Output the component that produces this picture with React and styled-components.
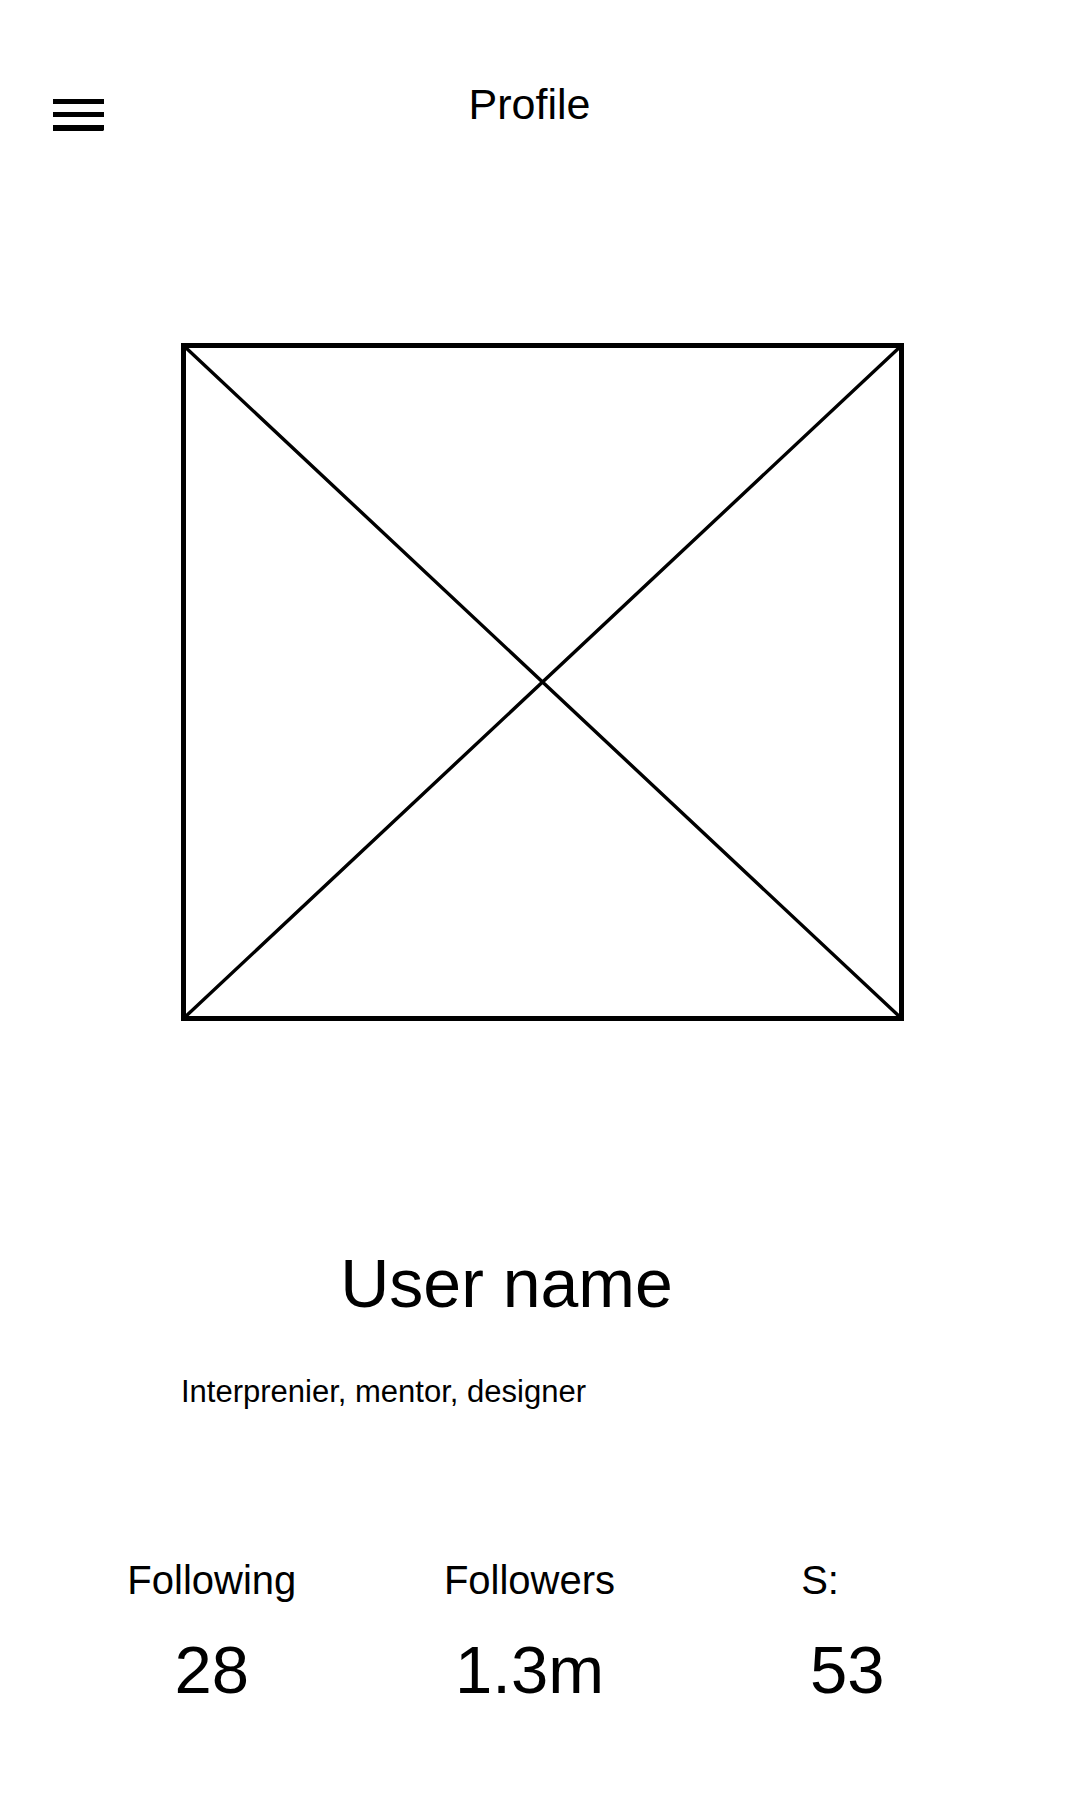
import React from 'react';
import styled, { createGlobalStyle } from 'styled-components';

const GlobalStyle = createGlobalStyle`
  *, *::before, *::after {
    box-sizing: border-box;
  }

  body {
    margin: 0;
    background: #fff;
    color: #000;
    font-family: "Liberation Sans", Arial, sans-serif;
  }
`;

const Page = styled.div`
  display: flex;
  flex-direction: column;
  min-height: 100vh;
  padding: 79px 74px 90px 53px;
`;

const Header = styled.header`
  display: grid;
  grid-template-columns: 1fr auto 1fr;
  align-items: start;
`;

const MenuButton = styled.button`
  display: flex;
  justify-self: start;
  padding: 20px 0 0;
  border: 0;
  background: none;
  color: inherit;
  cursor: pointer;
`;

const Title = styled.h1`
  margin: 0;
  font-size: 43px;
  font-weight: 400;
  line-height: 50px;
`;

const Profile = styled.main`
  display: flex;
  flex-direction: column;
  padding: 0 102px 0 128px;
  margin-top: 212px;
`;

const Picture = styled.div`
  aspect-ratio: 723 / 678;
  border: 5px solid #000;
`;

const Cross = styled.svg`
  display: block;
  width: 100%;
  height: 100%;
  overflow: visible;
`;

const Name = styled.h2`
  margin: 224px 0 0;
  padding-right: 72px;
  font-size: 68px;
  font-weight: 400;
  line-height: 76px;
  text-align: center;
`;

const Bio = styled.p`
  margin: 54px 0 0;
  font-size: 31px;
  line-height: 34px;
`;

const Stats = styled.dl`
  display: grid;
  grid-template-columns: repeat(3, 1fr);
  justify-items: center;
  margin: 148px 0 0;
`;

const Stat = styled.div`
  display: flex;
  flex-direction: column;
  gap: 29px;
  min-width: 92px;
`;

const StatLabel = styled.dt`
  font-size: 40px;
  line-height: 46px;
`;

const StatValue = styled.dd`
  margin: 0;
  font-size: 67px;
  line-height: 76px;
  text-align: center;
`;

const stats = [
  { label: 'Following', value: '28' },
  { label: 'Followers', value: '1.3m' },
  { label: 'S:', value: '53' },
];

function MenuIcon() {
  return (
    <svg width="51" height="32" viewBox="0 0 51 32" fill="currentColor" aria-hidden="true">
      <rect width="51" height="5" />
      <rect y="13" width="51" height="5" />
      <path d="M0 26H51V31L50 32H0Z" />
    </svg>
  );
}

export default function App() {
  return (
    <>
      <GlobalStyle />
      <Page>
        <Header>
          <MenuButton type="button" aria-label="Menu">
            <MenuIcon />
          </MenuButton>
          <Title>Profile</Title>
        </Header>
        <Profile>
          <Picture role="img" aria-label="Profile picture">
            <Cross viewBox="0 0 713 668" preserveAspectRatio="none">
              <path d="M-2 -2L715 670M715 -2L-2 670" stroke="#000" strokeWidth="3.4" />
            </Cross>
          </Picture>
          <Name>User name</Name>
          <Bio>Interprenier, mentor, designer</Bio>
        </Profile>
        <Stats>
          {stats.map(({ label, value }) => (
            <Stat key={label}>
              <StatLabel>{label}</StatLabel>
              <StatValue>{value}</StatValue>
            </Stat>
          ))}
        </Stats>
      </Page>
    </>
  );
}
